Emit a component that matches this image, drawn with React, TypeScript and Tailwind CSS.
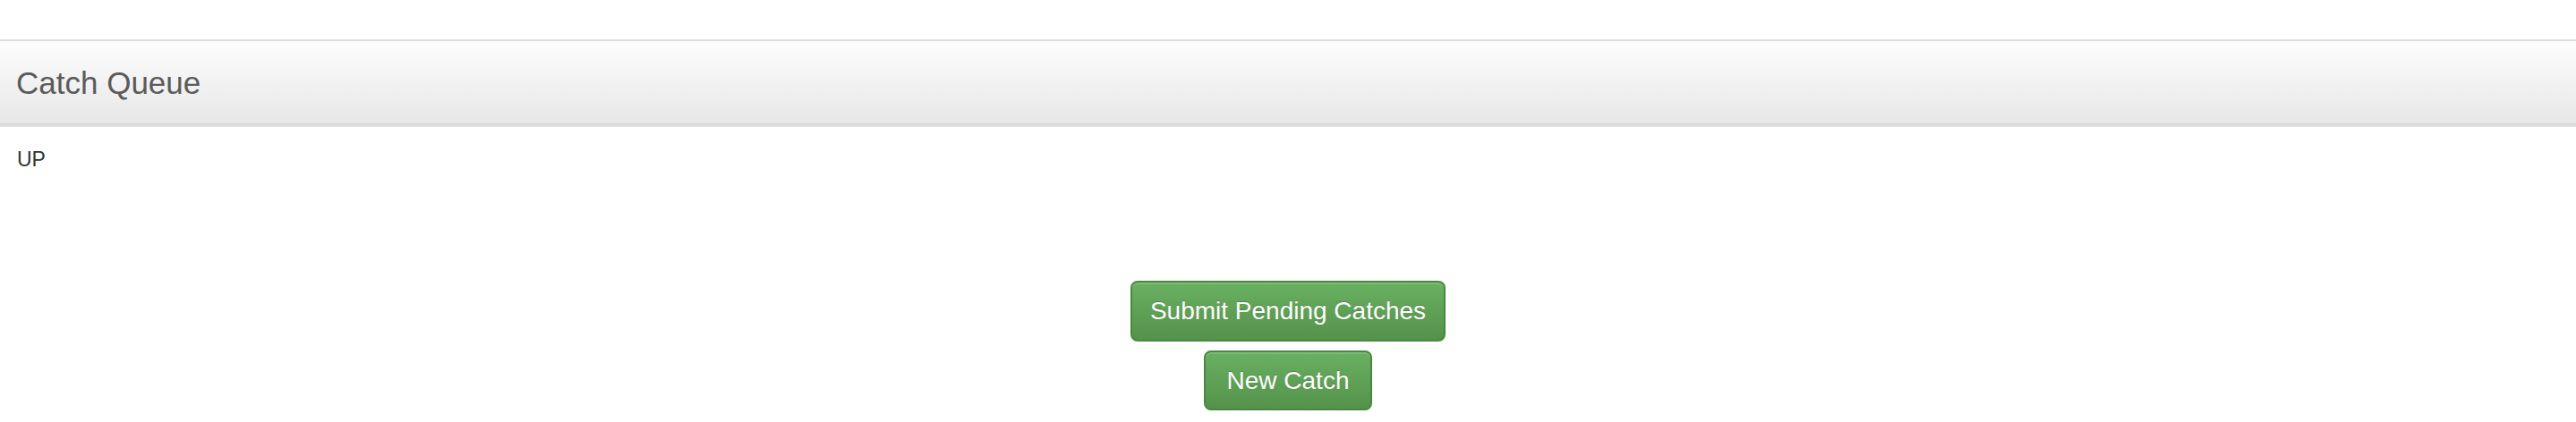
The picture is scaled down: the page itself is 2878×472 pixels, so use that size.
import React from 'react';

const font = { fontFamily: '"Liberation Sans", Arial, sans-serif' };

const GreenButton: React.FC<{ label: string; className: string }> = ({ label, className }) => (
  <button
    type="button"
    className={`flex items-center justify-center rounded-[8px] border-2 border-[#47893f] bg-gradient-to-b from-[#69b062] to-[#55924b] text-[28px] text-white shadow-[inset_0_2px_0_rgba(255,255,255,0.15)] [text-shadow:0_-1px_0_rgba(0,0,0,0.2)] ${className}`}
  >
    {label}
  </button>
);

export default function App() {
  return (
    <div className="min-h-[472px] w-full bg-white pt-[44px]" style={font}>
      {/* panel heading */}
      <div className="flex h-[96px] items-center border-t-2 border-b-2 border-t-[#dddddd] border-b-[#d8d8d8] bg-gradient-to-b from-[#fdfdfd] to-[#e7e7e7] px-[18px] shadow-[0_2px_0_#e2e2e2]">
        <h3 className="text-[35px] leading-none text-[#5b5b5b]">Catch Queue</h3>
      </div>

      {/* panel body */}
      <div className="px-[19px] pt-[27px]">
        <p className="text-[23px] leading-none text-[#333333]">UP</p>
      </div>

      <div className="mt-[124px] flex flex-col items-center gap-[10px]">
        <GreenButton label="Submit Pending Catches" className="h-[68px] w-[352px]" />
        <GreenButton label="New Catch" className="h-[67px] w-[188px]" />
      </div>
    </div>
  );
}
